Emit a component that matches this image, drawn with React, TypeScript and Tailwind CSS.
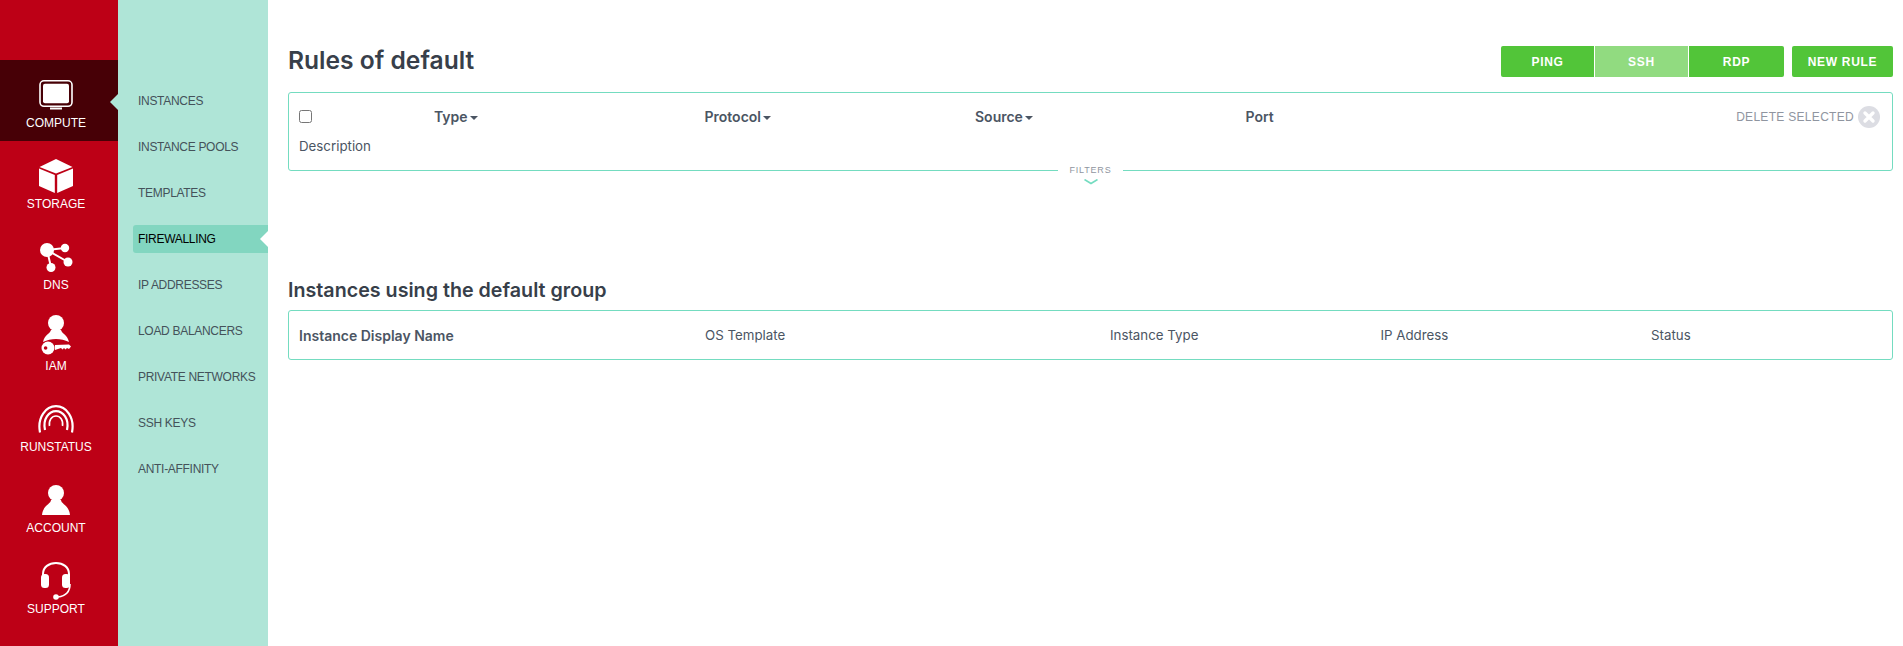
import React from 'react';

const ComputeIcon = () => (
    <svg viewBox="0 0 34 30" className="w-[34px] h-[30px]">
        <rect x="1" y="0.8" width="32" height="25.5" rx="4" fill="none" stroke="#fff" strokeWidth="1.6" />
        <rect x="4" y="3.8" width="26" height="19.5" rx="2" fill="#fff" />
        <rect x="11" y="27.5" width="12" height="2" fill="#fff" />
    </svg>
);

const StorageIcon = () => (
    <svg viewBox="0 0 34 34" className="w-[34px] h-[34px]">
        <path d="M17 0 L33.5 8 L17 14.5 L0.5 8 Z" fill="#fff" />
        <path d="M0 9.5 L15.8 16 V34 L0 27 Z" fill="#fff" />
        <path d="M18.2 16 L34 9.5 V27 L18.2 34 Z" fill="#fff" />
    </svg>
);

const DnsIcon = () => (
    <svg viewBox="0 0 33 29" className="w-[33px] h-[29px]">
        <path d="M7 7 L25 5 M7 7 L28 19 M7 7 L11 24" stroke="#fff" strokeWidth="2" fill="none" />
        <circle cx="7" cy="7" r="7" fill="#fff" />
        <circle cx="25" cy="5" r="4.2" fill="#fff" />
        <circle cx="28" cy="19" r="4.5" fill="#fff" />
        <circle cx="11" cy="24.5" r="4.5" fill="#fff" />
    </svg>
);

const IamIcon = () => (
    <svg viewBox="0 0 30 40" className="-mt-[6px] w-[30px] h-10">
        <circle cx="15" cy="8" r="8" fill="#fff" />
        <path d="M10 15 C9 19 4 19 2 27 C10 23 20 23 28 27 C26 19 21 19 20 15 Z" fill="#fff" />
        <path d="M14 30 L28 29.5 L30 31.5 L28 34 L26 33 L24.5 34.5 L23 33 L21.5 34.5 L20 33 L14 35 Z" fill="#fff" />
        <circle cx="7" cy="33" r="6.5" fill="#fff" />
        <circle cx="4.6" cy="33" r="1.8" fill="#bd0016" />
    </svg>
);

const RunstatusIcon = () => (
    <svg viewBox="0 0 36 28" className="w-9 h-7">
        <g fill="none" stroke="#fff" strokeWidth="2.2">
            <path d="M2 27.5 C-1 12 8 1.2 18 1.2 C28 1.2 37 12 34 27.5" />
            <path d="M7 25 C4.5 14 11 6.2 18 6.2 C25 6.2 31.5 14 29 25" />
            <path d="M11.5 21 C10.5 15 14 11 18 11 C22 11 25.5 15 24.5 21" strokeWidth="1.6" />
        </g>
    </svg>
);

const AccountIcon = () => (
    <svg viewBox="0 0 28 30" className="w-7 h-[30px]">
        <circle cx="14" cy="8" r="8" fill="#fff" />
        <path d="M9 15 C9 19 1 20 0 30 H28 C27 20 19 19 19 15 Z" fill="#fff" />
    </svg>
);

const SupportIcon = () => (
    <svg viewBox="0 0 30 38" className="w-[30px] h-[38px]">
        <path d="M2 15 V12 C2 5 8 1 15 1 C22 1 28 5 28 12 V15" fill="none" stroke="#fff" strokeWidth="2" />
        <rect x="0" y="12" width="8" height="14" rx="3.5" fill="#fff" />
        <rect x="21" y="12" width="8" height="14" rx="3.5" fill="#fff" />
        <path d="M29 22 C29 30 25 34 17 35" fill="none" stroke="#fff" strokeWidth="1.6" />
        <circle cx="15" cy="35" r="2.8" fill="#fff" />
    </svg>
);

const railItems = [
    { label: 'COMPUTE', icon: <ComputeIcon />, active: true },
    { label: 'STORAGE', icon: <StorageIcon /> },
    { label: 'DNS', icon: <DnsIcon /> },
    { label: 'IAM', icon: <IamIcon /> },
    { label: 'RUNSTATUS', icon: <RunstatusIcon /> },
    { label: 'ACCOUNT', icon: <AccountIcon /> },
    { label: 'SUPPORT', icon: <SupportIcon /> },
];

const subItems = ['INSTANCES', 'INSTANCE POOLS', 'TEMPLATES', 'FIREWALLING', 'IP ADDRESSES', 'LOAD BALANCERS', 'PRIVATE NETWORKS', 'SSH KEYS', 'ANTI-AFFINITY'];

const Caret = () => <span className="ml-[2px] inline-block w-0 h-0 align-middle border-x-[4px] border-x-transparent border-t-[4px] border-t-[#4b5563]" />;

const App = () => {
    return (
        <div className="flex h-[646px] w-full overflow-hidden bg-white font-['Inter',sans-serif] text-[#4b5563]">
            {/* Red rail */}
            <nav className="w-[118px] shrink-0 bg-[#bd0016] pt-[60px] font-['Liberation_Sans',sans-serif]">
                {railItems.map((item) => (
                    <div key={item.label} className={`relative flex h-[81px] flex-col items-center pr-[6px] ${item.active ? 'bg-[#470006]' : ''}`}>
                        <div className="mt-4 flex h-[38px] items-center justify-center">{item.icon}</div>
                        <span className="mt-px text-[12px] leading-4 text-white">{item.label}</span>
                        {item.active && (
                            <span className="absolute right-0 top-[34px] h-0 w-0 border-y-[8px] border-r-[8px] border-y-transparent border-r-[#afe5d7]" />
                        )}
                    </div>
                ))}
            </nav>

            {/* Sub menu */}
            <aside className="flex w-[150px] shrink-0 flex-col bg-[#afe5d7] pl-[15px] pt-[87px] font-['Liberation_Sans',sans-serif]">
                {subItems.map((item) => (
                    <div
                        key={item}
                        className={`relative mb-[18px] flex h-7 items-center rounded-l-[3px] pl-[5px] text-[12px] tracking-[-0.3px] ${item === 'FIREWALLING' ? 'bg-[#82d6c0] text-black' : 'text-[#44525a]'}`}
                    >
                        {item}
                        {item === 'FIREWALLING' && (
                            <span className="absolute right-0 top-[6px] h-0 w-0 border-y-[8px] border-r-[8px] border-y-transparent border-r-white" />
                        )}
                    </div>
                ))}
            </aside>

            {/* Main */}
            <main className="flex-1 pl-[20px] pr-[10px] pt-[46px]">
                <div className="flex h-[31px] items-center justify-between">
                    <h1 className="pb-[2px] text-[24.6px] font-semibold text-[#383f4a]">Rules of default</h1>
                    <div className="flex gap-2 font-['Liberation_Sans',sans-serif] text-[12px] font-bold tracking-[0.7px] text-white">
                        <div className="flex h-[31px] overflow-hidden rounded-[2px]">
                            <button className="w-[93px] bg-[#52c539]">PING</button>
                            <button className="ml-px w-[93px] bg-[#91db80]">SSH</button>
                            <button className="ml-px w-[95px] bg-[#52c539]">RDP</button>
                        </div>
                        <button className="h-[31px] w-[101px] rounded-[2px] bg-[#52c539]">NEW RULE</button>
                    </div>
                </div>

                <section className="relative mt-[15px] h-[79px] rounded-[3px] border border-[#74dcc0] px-[10px] text-[14px]">
                    <div className="grid h-[46px] grid-cols-[135px_270.5px_270.5px_270.5px_1fr] items-center">
                        <input type="checkbox" className="mt-px h-[13px] w-[13px]" />
                        <span className="font-semibold">Type<Caret /></span>
                        <span className="font-semibold">Protocol<Caret /></span>
                        <span className="font-semibold">Source<Caret /></span>
                        <div className="flex items-center justify-between pr-[2px]">
                            <span className="font-semibold">Port</span>
                            <span className="mt-[2px] flex items-center gap-[4px] font-['Liberation_Sans',sans-serif] text-[12px] tracking-[0.3px] text-[#8f95a0]">
                                DELETE SELECTED
                                <svg viewBox="0 0 22 22" className="h-[22px] w-[22px]">
                                    <circle cx="11" cy="11" r="11" fill="#dcdde3" />
                                    <path d="M7 7 L15 15 M15 7 L7 15" stroke="#fff" strokeWidth="3.4" strokeLinecap="round" />
                                </svg>
                            </span>
                        </div>
                    </div>
                    <div className="-mt-[3px] text-[13.3px] leading-[20px]">Description</div>

                    {/* Filters toggle sits over the bottom border */}
                    <div className="absolute left-[769px] top-[72px] flex w-[65px] flex-col items-center bg-white">
                        <span className="font-['Liberation_Sans',sans-serif] text-[9px] leading-[11px] tracking-[0.8px] text-[#8f95a0]">FILTERS</span>
                        <svg viewBox="0 0 14 6" className="mt-[3px] h-[6px] w-[14px]">
                            <path d="M0.5 0.5 L7 4.5 L13.5 0.5" fill="none" stroke="#74dcc0" strokeWidth="1.6" />
                        </svg>
                    </div>
                </section>

                <h2 className="mt-[107px] text-[19.7px] font-semibold leading-[24px] text-[#383f4a]">Instances using the default group</h2>

                <section className="mt-2 grid h-[50px] grid-cols-[406px_405px_270.5px_270.5px_1fr] items-center rounded-[3px] border border-[#74dcc0] px-[10px] text-[13.3px]">
                    <span className="text-[14px] font-semibold">Instance Display Name</span>
                    <span className="pt-px">OS Template</span>
                    <span className="pt-px">Instance Type</span>
                    <span className="pt-px">IP Address</span>
                    <span className="pt-px">Status</span>
                </section>
            </main>
        </div>
    );
};

export default App;
